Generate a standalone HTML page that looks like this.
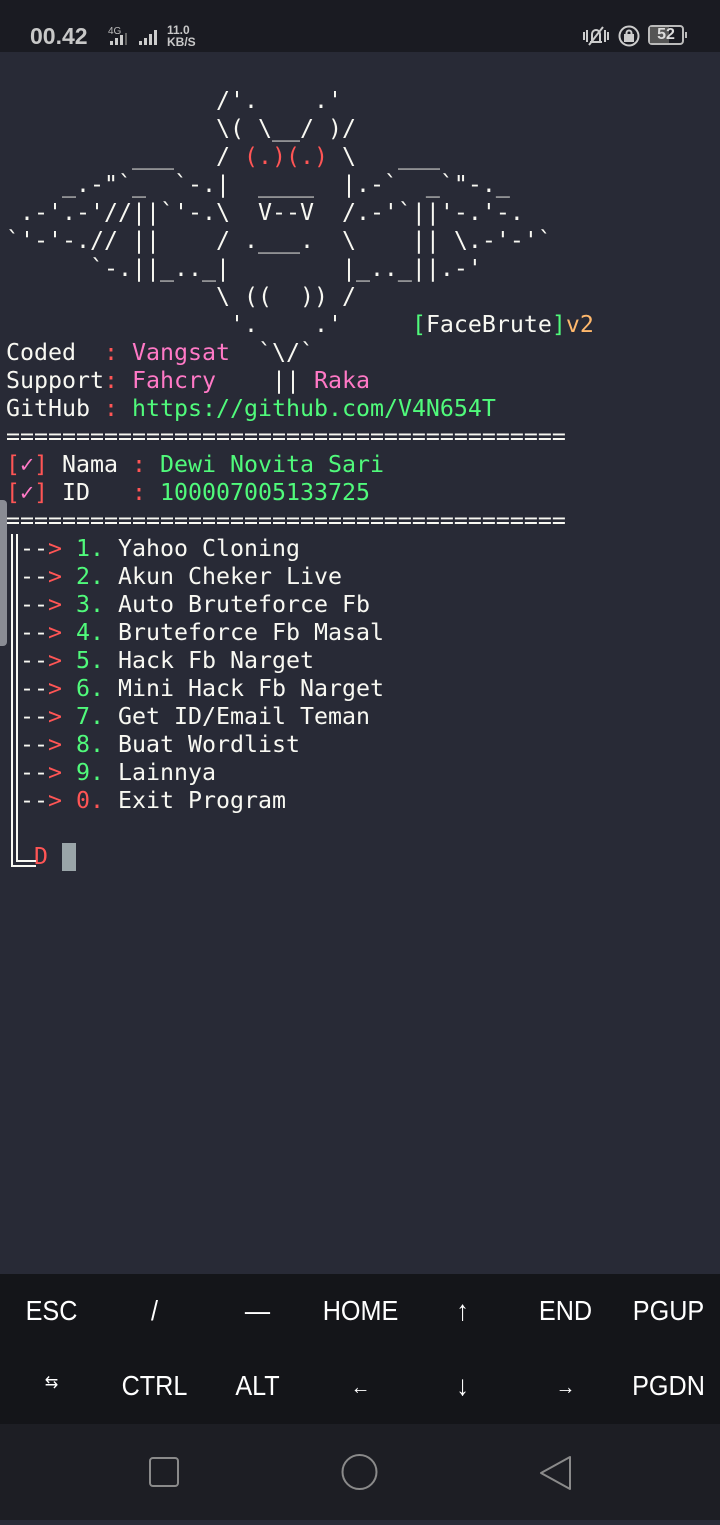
<!DOCTYPE html>
<html><head><meta charset="utf-8"><style>
*{margin:0;padding:0;box-sizing:border-box}
body{width:720px;height:1520px;background:#282a36;position:relative;overflow:hidden;font-family:"Liberation Sans",sans-serif}
#sb{position:absolute;left:0;top:0;width:720px;height:52px;background:#1a1b22;color:#c8c8c8}
pre{position:absolute;left:6px;top:87px;font-family:"DejaVu Sans Mono","Liberation Mono",monospace;font-size:23.25px;line-height:28px;color:#f8f8f2;white-space:pre}
.r{color:#ff5555}.g{color:#50fa7b}.p{color:#ff79c6}.o{color:#ffb86c}
.vl{position:absolute;background:#f8f8f2}
#kb{position:absolute;left:0;top:1274px;width:720px;height:150px;background:#141519}
#kb div{position:absolute;width:103px;text-align:center;color:#fff;font-size:28px;transform:scaleX(.9)}
#nav{position:absolute;left:0;top:1424px;width:720px;height:96px;background:#1d1e24}
</style></head><body>
<div id="sb">
<div style="position:absolute;left:30px;top:23px;font-size:23px;font-weight:bold;color:#c8c8c8">00.42</div>
<div style="position:absolute;left:108px;top:26px;font-size:10px;color:#bbb">4G</div>
<div style="position:absolute;left:110px;top:36px;width:22px;height:9px;border-bottom:0">
<span style="position:absolute;left:0;bottom:0;width:3px;height:4px;background:#ccc"></span><span style="position:absolute;left:5px;bottom:0;width:3px;height:7px;background:#ccc"></span><span style="position:absolute;left:10px;bottom:0;width:3px;height:10px;background:#ccc"></span><span style="position:absolute;left:15px;bottom:0;width:2px;height:12px;background:#666"></span></div>
<div style="position:absolute;left:139px;top:30px;width:22px;height:15px">
<span style="position:absolute;left:0;bottom:0;width:3px;height:4px;background:#ccc"></span><span style="position:absolute;left:5px;bottom:0;width:3px;height:7px;background:#ccc"></span><span style="position:absolute;left:10px;bottom:0;width:3px;height:11px;background:#ccc"></span><span style="position:absolute;left:15px;bottom:0;width:3px;height:15px;background:#ccc"></span></div>
<div style="position:absolute;left:167px;top:24px;font-size:12px;line-height:12px;font-weight:bold;color:#c8c8c8">11.0<br>KB/S</div>
<svg style="position:absolute;left:580px;top:24px" width="32" height="24" viewBox="0 0 32 24" fill="none" stroke="#ccc" stroke-width="2"><path d="M10 18h12M12 18V10a4 4 0 0 1 8 0v8M4 8v8M7 6v12M25 6v12M28 8v8M9 21L23 3"/></svg>
<svg style="position:absolute;left:617px;top:24px" width="24" height="24" viewBox="0 0 24 24" fill="none" stroke="#ccc" stroke-width="2"><circle cx="12" cy="12" r="9.5"/><rect x="8" y="11" width="8" height="6" fill="#ccc"/><path d="M9.5 11V9a2.5 2.5 0 0 1 5 0v2"/></svg>
<div style="position:absolute;left:648px;top:25px;width:36px;height:20px;border:2px solid #bbb;border-radius:4px;font-size:16px;font-weight:bold;text-align:center;line-height:16px;color:#ddd"><span style="position:absolute;left:0;top:0;width:19px;height:16px;background:#555"></span><span style="position:relative">52</span></div>
<div style="position:absolute;left:685px;top:32px;width:2px;height:6px;background:#bbb"></div>
</div>
<div style="position:absolute;left:0;top:500px;width:7px;height:146px;background:#8a8c94;border-radius:0 4px 4px 0"></div>
<pre>               /'.    .'
               \( \__/ )/
         ___   / <span class="r">(.)(.)</span> \   ___
    _.-"`_  `-.|  ____  |.-`  _`"-._
 .-'.-'//||`'-.\  V--V  /.-'`||'-.'-.
`'-'-.// ||    / .___.  \    || \.-'-'`
      `-.||_.._|        |_.._||.-'
               \ ((  )) /
                '.    .'     <span class="g">[</span>FaceBrute<span class="g">]</span><span class="o">v2</span>
Coded  <span class="r">:</span> <span class="p">Vangsat</span>  `\/`
Support<span class="r">:</span> <span class="p">Fahcry</span>    || <span class="p">Raka</span>
GitHub <span class="r">:</span> <span class="g">https://github.com/V4N654T</span>
========================================
<span class="r">[</span><span class="p">✓</span><span class="r">]</span> Nama <span class="r">:</span> <span class="g">Dewi Novita Sari</span>
<span class="r">[</span><span class="p">✓</span><span class="r">]</span> ID   <span class="r">:</span> <span class="g">100007005133725</span>
========================================
 --<span class="r">&gt;</span> <span class="g">1.</span> Yahoo Cloning
 --<span class="r">&gt;</span> <span class="g">2.</span> Akun Cheker Live
 --<span class="r">&gt;</span> <span class="g">3.</span> Auto Bruteforce Fb
 --<span class="r">&gt;</span> <span class="g">4.</span> Bruteforce Fb Masal
 --<span class="r">&gt;</span> <span class="g">5.</span> Hack Fb Narget
 --<span class="r">&gt;</span> <span class="g">6.</span> Mini Hack Fb Narget
 --<span class="r">&gt;</span> <span class="g">7.</span> Get ID/Email Teman
 --<span class="r">&gt;</span> <span class="g">8.</span> Buat Wordlist
 --<span class="r">&gt;</span> <span class="g">9.</span> Lainnya
 --<span class="r">&gt;</span> <span class="r">0.</span> Exit Program

  <span class="r">D</span></pre>
<div class="vl" style="left:11px;top:534px;width:2px;height:333px"></div>
<div class="vl" style="left:16px;top:534px;width:2px;height:328px"></div>
<div class="vl" style="left:16px;top:860px;width:20px;height:2px"></div>
<div class="vl" style="left:11px;top:865px;width:25px;height:2px"></div>
<div style="position:absolute;left:62px;top:843px;width:14px;height:28px;background:#9aa5a9"></div>
<div id="kb">
<div style="left:0;top:21px">ESC</div><div style="left:103px;top:21px">/</div><div style="left:206px;top:21px">—</div><div style="left:309px;top:21px">HOME</div><div style="left:411px;top:21px">↑</div><div style="left:514px;top:21px">END</div><div style="left:617px;top:21px">PGUP</div>
<div style="left:0;top:98px;font-size:18px">⇆</div><div style="left:103px;top:96px">CTRL</div><div style="left:206px;top:96px">ALT</div><div style="left:309px;top:100px;font-size:22px">←</div><div style="left:411px;top:96px">↓</div><div style="left:514px;top:100px;font-size:22px">→</div><div style="left:617px;top:96px">PGDN</div>
</div>
<div id="nav">
<svg width="720" height="96" fill="none" stroke="#8a8a8a" stroke-width="2"><rect x="150" y="34" width="28" height="28" rx="3"/><circle cx="359.5" cy="48" r="17"/><path d="M570 33v32l-29-16z" stroke-linejoin="round"/></svg>
</div>
</body></html>
